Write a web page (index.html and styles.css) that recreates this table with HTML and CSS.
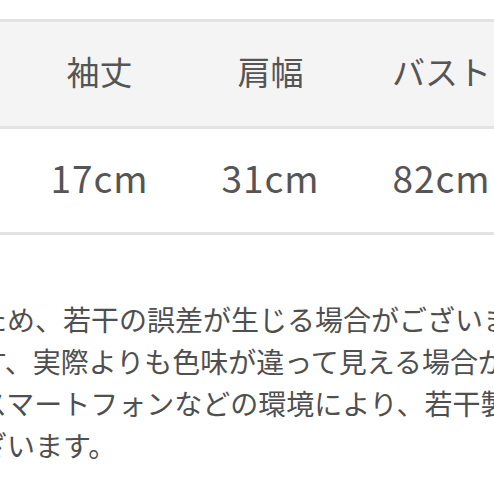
FILE: index.html
```html
<!DOCTYPE html>
<html lang="ja">
<head>
    <meta charset="UTF-8">
    <title>サイズ表</title>
    <link rel="stylesheet" href="styles.css">
</head>
<body>
    <table class="size-table">
        <thead>
            <tr>
                <th>着丈</th>
                <th>袖丈</th>
                <th>肩幅</th>
                <th>バスト</th>
            </tr>
        </thead>
        <tbody>
            <tr>
                <td>60cm</td>
                <td>17cm</td>
                <td>31cm</td>
                <td>82cm</td>
            </tr>
        </tbody>
    </table>

    <!-- 注意書き -->
    <p class="note">
        るため、若干の誤差が生じる場合がございます。<br>
        ます、実際よりも色味が違って見える場合がございます。<br>
        やスマートフォンなどの環境により、若干製品と異なる場合が<br>
        ございます。
    </p>
</body>
</html>
```

FILE: styles.css
```css
body {
    margin: 0;
    overflow: hidden;
    background-color: #ffffff;
    font-family: "Noto Sans CJK JP", "Noto Sans", sans-serif;
    color: #4f4f4f;
}
.size-table {
    margin: 19px 0 0 -157px;
    width: 684px;
    border-collapse: collapse;
    table-layout: fixed;
    border-top: 3px solid #e3e3e3;
}
.size-table th, .size-table td {
    text-align: center;
    border-bottom: 3px solid #e3e3e3;
    padding: 0;
    color: #555;
}
.size-table th {
    height: 98px;
    padding-bottom: 6px;
    font-size: 33px;
    font-weight: normal;
    background-color: #f4f4f4;
}
.size-table td {
    height: 95px;
    padding-bottom: 8px;
    font-size: 37px;
    letter-spacing: 1px;
}
.note {
    margin: 63px 0 0 -49px;
    font-size: 28px;
    line-height: 42px;
    white-space: nowrap;
}
```
